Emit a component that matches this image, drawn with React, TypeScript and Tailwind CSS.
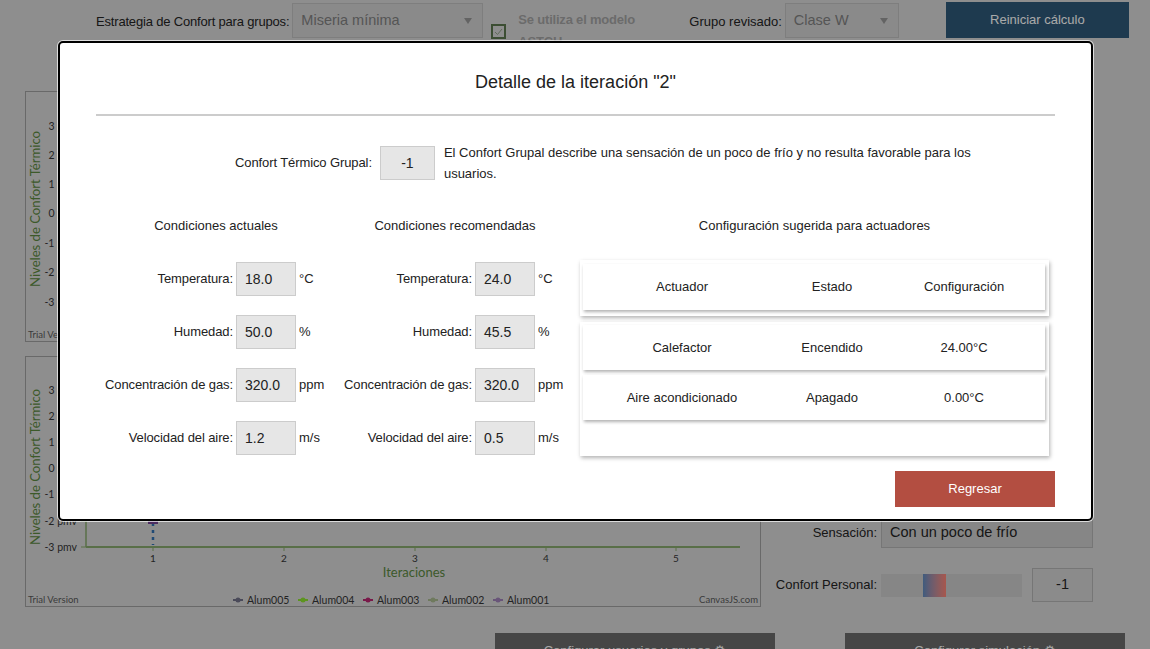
import React from "react";

const legend = [
  { name: "Alum005", color: "#6a6a80" },
  { name: "Alum004", color: "#86d42e" },
  { name: "Alum003", color: "#ae2569" },
  { name: "Alum002", color: "#9faf87" },
  { name: "Alum001", color: "#977aae" },
];

const actual = [
  { label: "Temperatura:", value: "18.0", unit: "°C" },
  { label: "Humedad:", value: "50.0", unit: "%" },
  { label: "Concentración de gas:", value: "320.0", unit: "ppm" },
  { label: "Velocidad del aire:", value: "1.2", unit: "m/s" },
];

const recommended = [
  { label: "Temperatura:", value: "24.0", unit: "°C" },
  { label: "Humedad:", value: "45.5", unit: "%" },
  { label: "Concentración de gas:", value: "320.0", unit: "ppm" },
  { label: "Velocidad del aire:", value: "0.5", unit: "m/s" },
];

const actuators = [
  { name: "Calefactor", state: "Encendido", config: "24.00°C" },
  { name: "Aire acondicionado", state: "Apagado", config: "0.00°C" },
];

const Caret = () => (
  <svg width="8" height="6" viewBox="0 0 8 6" className="text-[#8f8f8f]">
    <path d="M0 0h8L4 6z" fill="currentColor" />
  </svg>
);

type ChartProps = { ys: number[]; titleY: number; axisY: number; full?: boolean };

// the first chart sits almost entirely under the dialog, so only its left strip is drawn
const Chart: React.FC<ChartProps> = ({ ys, titleY, axisY, full }) => {
  const labels = ["3", "2", "1", "0", "-1", "-2", "-3"];
  const xs = [127, 258, 389, 520, 650];
  return (
    <div className="h-[251px] w-[736px] border border-[#979797]">
      <svg width="734" height="249" className="block font-['Lato',sans-serif]">
        <text
          x="0"
          y="0"
          transform={`translate(14 ${titleY}) rotate(-90)`}
          textAnchor="middle"
          fontSize="13"
          fill="#57813c"
          textLength="156"
          lengthAdjust="spacingAndGlyphs"
        >
          Niveles de Confort Térmico
        </text>
        {ys.map((y, i) => (
          <g key={i}>
            <text x="51" y={y + 4} textAnchor="end" fontSize="10.5" fill="#333">
              {labels[i]} pmv
            </text>
            <line x1="55" x2="60" y1={y} y2={y} stroke="#80a067" />
          </g>
        ))}
        <line x1="60" x2="60" y1="10" y2={axisY} stroke="#80a067" strokeWidth="1.5" />
        <line x1="60" x2="714" y1={axisY} y2={axisY} stroke="#80a067" strokeWidth="2" />
        <text x="2" y="246" fontSize="9.5" fill="#555">
          Trial Version
        </text>
        {full && (
          <>
            {xs.map((x, i) => (
              <g key={x}>
                <line x1={x} x2={x} y1={axisY} y2={axisY + 4} stroke="#80a067" />
                <text x={x} y={axisY + 15} textAnchor="middle" fontSize="10" fill="#333">
                  {i + 1}
                </text>
              </g>
            ))}
            <text x="388" y={axisY + 30} textAnchor="middle" fontSize="13" fill="#57813c">
              Iteraciones
            </text>
            <line x1="127" x2="127" y1="166" y2={axisY - 2} stroke="#2f6aa8" strokeWidth="2.5" strokeDasharray="3 4" />
            <rect x="122" y="162" width="10" height="5" fill="#6e3f8a" />
            <text x="732" y="246" textAnchor="end" fontSize="9.5" fill="#555">
              CanvasJS.com
            </text>
            {legend.map((l, i) => {
              const x = 207 + i * 65;
              return (
                <g key={l.name}>
                  <line x1={x} x2={x + 10} y1="243" y2="243" stroke={l.color} strokeWidth="2" />
                  <circle cx={x + 5} cy="243" r="2.5" fill={l.color} />
                  <text x={x + 14} y="247" fontSize="10.5" fill="#333">
                    {l.name}
                  </text>
                </g>
              );
            })}
          </>
        )}
      </svg>
    </div>
  );
};

const Field: React.FC<{ label: string; value: string; unit: string; cols: string }> = ({
  label,
  value,
  unit,
  cols,
}) => (
  <div className={`grid ${cols} items-center gap-x-[3px]`}>
    <span className="whitespace-nowrap text-right tracking-[-0.1px]">{label}</span>
    <div className="flex h-[34px] items-center border border-[#cccccc] bg-[#e6e6e6] pl-[8px] text-[14px]">
      {value}
    </div>
    <span>{unit}</span>
  </div>
);

const App: React.FC = () => {
  return (
    <div className="relative h-[649px] w-[1150px] overflow-hidden bg-[#cccccc] font-['Liberation_Sans',Arial,sans-serif] text-[13px] text-[#222]">
      {/* page under the dialog */}
      <div className="flex h-[41px] items-start whitespace-nowrap pl-[96px]">
        <span className="mt-[12px] tracking-[-0.18px]">Estrategia de Confort para grupos:</span>
        <div className="ml-[3px] mt-[3px] flex h-[35px] w-[191px] items-center justify-between border border-[#b5b5b5] bg-[#c6c6c6] pl-[8px] pr-[10px] text-[14.5px] text-[#7a7a7a]">
          Miseria mínima
          <Caret />
        </div>
        <div className="ml-[8px] mt-[24px] flex h-[15px] w-[15px] items-center justify-center border-2 border-[#56704a]">
          <svg width="9" height="8" viewBox="0 0 9 8">
            <path d="M1 4l2.5 2.5L8 1" stroke="#8a9a80" strokeWidth="1" fill="none" />
          </svg>
        </div>
        <div className="ml-[12px] mt-[9px] w-[150px] whitespace-normal font-bold leading-[22px] tracking-[-0.2px] text-[#9a9a9a]">
          Se utiliza el modelo ASTCH
        </div>
        <span className="ml-[21px] mt-[12px]">Grupo revisado:</span>
        <div className="ml-[3px] mt-[3px] flex h-[35px] w-[114px] items-center justify-between border border-[#b5b5b5] bg-[#c6c6c6] pl-[8px] pr-[10px] text-[14.5px] text-[#7a7a7a]">
          Clase W
          <Caret />
        </div>
        <button className="ml-[47px] mt-[2px] h-[36px] w-[183px] bg-[#2c5371] text-[13px] text-[#f2f2f2]">
          Reiniciar cálculo
        </button>
      </div>

      <div className="mt-[50px] flex">
        <div className="flex flex-col gap-[14px] pl-[25px]">
          <Chart ys={[34, 63, 92, 121, 151, 180, 210]} titleY={117} axisY={210} />
          <Chart ys={[33, 59, 85, 111, 137, 164, 190]} titleY={110} axisY={190} full />
        </div>
        <div className="flex flex-1 flex-col items-end justify-end gap-[20px] pb-[5px] pr-[57px]">
          <div className="flex items-center gap-[4px]">
            <span>Sensación:</span>
            <div className="h-[31px] w-[212px] border border-[#aaaaaa] bg-[#c0c0c0] px-[8px] pt-[4px] text-[14.5px]">
              Con un poco de frío
            </div>
          </div>
          <div className="flex items-center">
            <span>Confort Personal:</span>
            <div className="ml-[4px] flex h-[23px] w-[141px] bg-[#c0c0c0] pl-[42px]">
              <div className="h-full w-[23px] bg-gradient-to-r from-[#5a83b4] to-[#f07c6e]" />
            </div>
            <div className="ml-[10px] flex h-[34px] w-[61px] items-center justify-center border border-[#aaaaaa] bg-[#c8c8c8] text-[14.5px]">
              -1
            </div>
          </div>
        </div>
      </div>

      <div className="mt-[26px] flex gap-[70px] pl-[495px]">
        <button className="h-[36px] w-[280px] bg-[#656565] text-[13px] text-[#f0f0f0]">Configurar usuarios y grupos ⚙</button>
        <button className="h-[36px] w-[280px] bg-[#656565] text-[13px] text-[#f0f0f0]">Configurar simulación ⚙</button>
      </div>

      {/* overlay */}
      <div className="absolute inset-0 bg-black/30" />

      {/* dialog */}
      <div className="absolute left-[58px] top-[41px] h-[480px] w-[1035px] rounded-[5px] border-2 border-black bg-white px-[36px] pt-[27px] text-[#222] shadow-[0_0_0_1px_rgba(255,255,255,0.7)]">
        <h2 className="text-center text-[18px] leading-[24px]">Detalle de la iteración "2"</h2>
        <div className="mt-[20px] h-[2px] bg-[#cccccc]" />

        <div className="mt-[30px] flex items-start pl-[139px]">
          <div className="flex h-[34px] items-center tracking-[-0.1px]">Confort Térmico Grupal:</div>
          <div className="ml-[8px] flex h-[34px] w-[55px] items-center justify-center border border-[#cccccc] bg-[#e6e6e6] text-[14px]">
            -1
          </div>
          <p className="-mt-[4px] ml-[9px] w-[548px] leading-[21px]">
            El Confort Grupal describe una sensación de un poco de frío y no resulta favorable para los usuarios.
          </p>
        </div>

        <div className="mt-[32px] flex items-start">
          <div className="w-[240px]">
            <div className="text-center leading-[20px]">Condiciones actuales</div>
            <div className="mt-[26px] flex flex-col gap-[19px]">
              {actual.map((f) => (
                <Field key={f.label} {...f} cols="grid-cols-[137px_60px_37px]" />
              ))}
            </div>
          </div>
          <div className="w-[238px]">
            <div className="text-center leading-[20px]">Condiciones recomendadas</div>
            <div className="mt-[26px] flex flex-col gap-[19px]">
              {recommended.map((f) => (
                <Field key={f.label} {...f} cols="grid-cols-[136px_60px_36px]" />
              ))}
            </div>
          </div>
          <div className="ml-[6px] w-[469px]">
            <div className="text-center leading-[20px]">Configuración sugerida para actuadores</div>
            <div className="mt-[24px] h-[56px] bg-white pl-[3px] pr-[4px] pt-[4px] shadow-[1px_2px_4px_rgba(0,0,0,0.3)]">
              <div className="grid h-[46px] grid-cols-[198px_102px_1fr] items-center bg-white text-center shadow-[1px_2px_3px_rgba(0,0,0,0.3)]">
                <span>Actuador</span>
                <span>Estado</span>
                <span>Configuración</span>
              </div>
            </div>
            <div className="mt-[6px] flex h-[134px] flex-col gap-[5px] bg-white pl-[3px] pr-[4px] pt-[3px] shadow-[1px_2px_4px_rgba(0,0,0,0.3)]">
              {actuators.map((a) => (
                <div
                  key={a.name}
                  className="grid h-[45px] grid-cols-[198px_102px_1fr] items-center bg-white text-center shadow-[1px_2px_3px_rgba(0,0,0,0.3)]"
                >
                  <span>{a.name}</span>
                  <span>{a.state}</span>
                  <span>{a.config}</span>
                </div>
              ))}
            </div>
          </div>
        </div>

        <div className="mt-[15px] flex justify-end">
          <button className="h-[36px] w-[160px] bg-[#b34e41] text-[13px] text-white">Regresar</button>
        </div>
      </div>
    </div>
  );
};

export default App;
